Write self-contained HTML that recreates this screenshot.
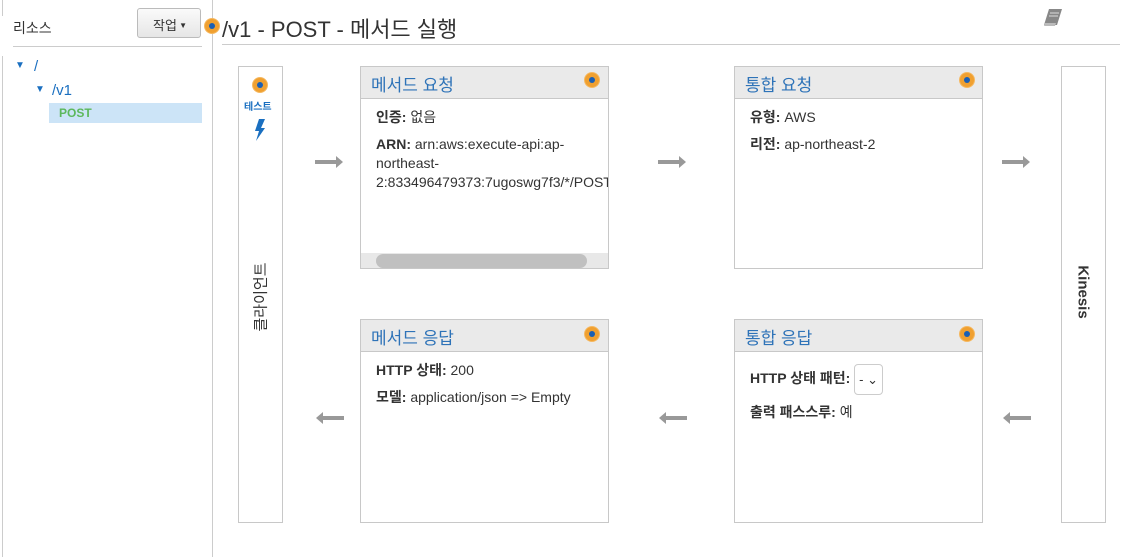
<!DOCTYPE html>
<html><head><meta charset="utf-8"><style>
*{box-sizing:border-box;margin:0;padding:0}
body{width:1125px;height:557px;background:#fff;font-family:"Liberation Sans","Noto Sans CJK KR",sans-serif;color:#333;position:relative;overflow:hidden;font-size:14px}
.a{position:absolute}
.dot{position:absolute;width:14px;height:14px;border-radius:50%;background:#f0a030;box-shadow:0 0 0 1px #f5b860}
.dot:after{content:"";position:absolute;left:4px;top:4px;width:6px;height:6px;border-radius:50%;background:#1a5fb4}
.box{position:absolute;border:1px solid #c8c8c8;background:#fff}
.hd{height:32px;background:#eaeaea;border-bottom:1px solid #c8c8c8;color:#2e73b8;font-size:17px;padding:4px 0 0 10px}
.bd{padding:9px 15px;font-size:14px;line-height:19px;color:#333}
.bd p{margin-bottom:8px}
.arr{position:absolute;height:4px;background:#999;width:22px}
.arr.r:after{content:"";position:absolute;right:-6px;top:-4px;border-left:7px solid #999;border-top:6px solid transparent;border-bottom:6px solid transparent}
.arr.l:before{content:"";position:absolute;left:-6px;top:-4px;border-right:7px solid #999;border-top:6px solid transparent;border-bottom:6px solid transparent}
</style></head><body>
<div class="a" style="left:2px;top:0;width:1px;height:16px;background:#ccc"></div>
<div class="a" style="left:2px;top:56px;width:1px;height:501px;background:#ccc"></div>
<div class="a" style="left:212px;top:0;width:1px;height:557px;background:#ccc"></div>
<div class="a" style="left:13px;top:18px;font-size:14px">리소스</div>
<div class="a" style="left:137px;top:8px;width:64px;height:30px;border:1px solid #bbb;border-radius:3px;background:linear-gradient(#fafafa,#e6e6e6);font-size:13px;padding:6px 0 0 15px">작업<span style="font-size:8px;vertical-align:2px"> ▼</span></div>
<div class="a" style="left:13px;top:46px;width:189px;height:1px;background:#ccc"></div>
<div class="a" style="left:15px;top:60px;color:#1a6fc0;font-size:10px">▼</div>
<div class="a" style="left:34px;top:58px;color:#1a6fc0;font-size:15px">/</div>
<div class="a" style="left:35px;top:84px;color:#1a6fc0;font-size:10px">▼</div>
<div class="a" style="left:52px;top:82px;color:#1a6fc0;font-size:15px">/v1</div>
<div class="a" style="left:49px;top:103px;width:153px;height:20px;background:#cce4f7;color:#5cb85c;font-weight:bold;font-size:12px;padding:3px 0 0 10px">POST</div>
<div class="dot" style="left:205px;top:19px"></div>
<div class="a" style="left:222px;top:12px;font-size:22px;color:#333">/v1 - POST - 메서드 실행</div>
<div class="a" style="left:222px;top:44px;width:898px;height:1px;background:#ccc"></div>
<svg class="a" style="left:1042px;top:8px" width="22" height="20" viewBox="0 0 22 20"><path d="M7 1h13l-5 16H2z" fill="#888"/><path d="M3 15h11l-1 3H2z" fill="#bbb"/><path d="M8 5h9M7 8h9" stroke="#ddd" stroke-width="1"/></svg>

<div class="box" style="left:238px;top:66px;width:45px;height:457px"></div>
<div class="dot" style="left:253px;top:78px"></div>
<div class="a" style="left:244px;top:98px;color:#1a6fc0;font-size:10px;font-weight:bold">테스트</div>
<svg class="a" style="left:253px;top:118px" width="14" height="24" viewBox="0 0 14 24"><path d="M6 1h6L8 10h4L3 23l3-10H2z" fill="#1a6fc0"/></svg>
<div class="a" style="left:260px;top:297px;transform:translate(-50%,-50%) rotate(-90deg);font-size:15px;white-space:nowrap">클라이언트</div>

<div class="box" style="left:360px;top:66px;width:249px;height:203px;overflow:hidden">
<div class="hd">메서드 요청</div>
<div class="bd"><p><b>인증:</b> 없음</p><p style="white-space:nowrap"><b>ARN:</b> arn:aws:execute-api:ap-<br>northeast-<br>2:833496479373:7ugoswg7f3/*/POST</p></div>
<div class="a" style="left:0;top:186px;width:249px;height:16px;background:#e8e8e8"></div>
<div class="a" style="left:15px;top:187px;width:211px;height:14px;border-radius:7px;background:#c0c0c0"></div>
</div>
<div class="dot" style="left:585px;top:73px"></div>

<div class="box" style="left:734px;top:66px;width:249px;height:203px">
<div class="hd">통합 요청</div>
<div class="bd"><p><b>유형:</b> AWS</p><p><b>리전:</b> ap-northeast-2</p></div></div>
<div class="dot" style="left:960px;top:73px"></div>

<div class="box" style="left:1061px;top:66px;width:45px;height:457px"></div>
<div class="a" style="left:1083px;top:292px;transform:translate(-50%,-50%) rotate(90deg);font-size:15px;font-weight:bold;white-space:nowrap">Kinesis</div>

<div class="box" style="left:360px;top:319px;width:249px;height:204px">
<div class="hd">메서드 응답</div>
<div class="bd"><p><b>HTTP 상태:</b> 200</p><p><b>모델:</b> application/json =&gt; Empty</p></div></div>
<div class="dot" style="left:585px;top:327px"></div>

<div class="box" style="left:734px;top:319px;width:249px;height:204px">
<div class="hd">통합 응답</div>
<div class="bd" style="padding-top:12px"><p><b>HTTP 상태 패턴:</b> <span style="display:inline-block;width:29px;height:31px;border:1px solid #ccc;border-radius:4px;vertical-align:middle;font-size:13px;padding:5px 0 0 4px">- ⌄</span></p><p><b>출력 패스스루:</b> 예</p></div></div>
<div class="dot" style="left:960px;top:327px"></div>

<div class="arr r" style="left:315px;top:160px"></div>
<div class="arr r" style="left:658px;top:160px"></div>
<div class="arr r" style="left:1002px;top:160px"></div>
<div class="arr l" style="left:322px;top:416px"></div>
<div class="arr l" style="left:665px;top:416px"></div>
<div class="arr l" style="left:1009px;top:416px"></div>
</body></html>
